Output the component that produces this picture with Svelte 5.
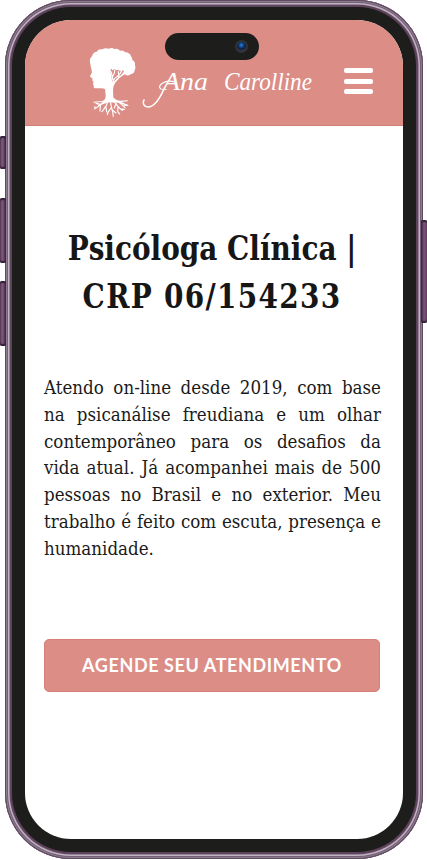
<script>
  const titleLines = ['Psicóloga Clínica |', 'CRP 06/154233'];
  const bioLines = [
    'Atendo on-line desde 2019, com base',
    'na psicanálise freudiana e um olhar',
    'contemporâneo para os desafios da',
    'vida atual. Já acompanhei mais de 500',
    'pessoas no Brasil e no exterior. Meu',
    'trabalho é feito com escuta, presença e',
    'humanidade.'
  ];
</script>

<div class="stage">
  <i class="key left mute"></i>
  <i class="key left up"></i>
  <i class="key left down"></i>
  <i class="key right"></i>
  <div class="phone">
    <div class="bezel">
      <div class="screen">
        <header>
          <svg class="tree" viewBox="0 0 210 252" aria-hidden="true">
            <path fill="#fff" d="M32 78 L30 66 Q28 56 36 49 Q38 37 50 35 Q55 26 67 28 Q76 22 87 26 Q95 22 103 27 Q114 24 120 32 Q130 30 136 37 Q150 38 153 49 Q158 54 157 60 Q167 66 165 75 Q168 84 164 91 Q163 101 152 103 Q144 110 134 103 Q126 109 119 113 L106 128 Q99 137 99 150 L100 172 Q105 181 120 182 L144 181 L143 184 L124 186 L146 196 L144 198 L113 188 L85 187 L55 198 L53 196 L75 185 L40 188 L40 185 L67 183 Q78 180 77 165 L75 148 Q70 144 59 145 L44 145 Q40 144 41 138 L39 130 L41 125 L37 122 L37 115 L30 110 Q31 106 36 97 Z" />
            <path fill="#db8d86" d="M90 89 L95 87 L97 91 L104 87 L109 91 L115 89 L120 93 L129 90 L132 94 L123 106 L113 113 L99 127 L96 121 L94 108 Z" />
            <g fill="none" stroke="#fff" stroke-width="3.5" stroke-linecap="round">
              <path d="M99 128 C101 113 107 111 120 108 M99 120 L94 98 L91 92 M98 109 L103 99 L104 90 M111 110 L120 101 L126 91 M116 105 L115 95" />
              <path d="M80 179 C65 188 60 199 43 207 M63 194 L48 190 M61 196 L60 213 M85 182 C80 200 72 207 66 215 M78 201 L80 216 M91 181 C92 199 98 208 100 229 M93 204 L84 217 L82 224 M97 210 L108 219 M98 181 C110 191 113 202 127 211 M114 199 L113 215 L119 222 M108 190 L103 204 M118 187 L135 203 M131 198 L141 195 M50 203 L43 201 M123 207 L133 208" />
            </g>
          </svg>
          <svg class="name" viewBox="0 0 180 50" role="img" aria-label="Ana Carolline">
            <path d="M24 29 C20 38 15 47 8 47 C4 47 2 43 4 40" fill="none" stroke="#fff" stroke-width="1.6" stroke-linecap="round" />
            <path d="M35 22 C25 19 16 26 21 29" fill="none" stroke="#fff" stroke-width="1.2" stroke-linecap="round" />
            <text x="23" y="30" textLength="45" lengthAdjust="spacingAndGlyphs">Ana</text>
            <text x="84" y="30" textLength="88" lengthAdjust="spacingAndGlyphs">Carolline</text>
          </svg>
          <button class="menu" aria-label="Menu"><i></i><i></i><i></i></button>
        </header>
        <main>
          <h1>
            {#each titleLines as line}<span>{line}</span>{/each}
          </h1>
          <p>
            {#each bioLines as line}<span>{line}</span>{/each}
          </p>
          <button class="cta"><span>AGENDE SEU ATENDIMENTO</span></button>
        </main>
      </div>
    </div>
  </div>
  <div class="island"><i></i></div>
</div>

<style>
  :global(body) { margin: 0; background: #fff; }
  * { box-sizing: border-box; }
  .stage { position: relative; width: 427px; height: 860px; padding: 0 4px 1px 5px; overflow: hidden; }
  .phone {
    height: 859px; padding: 7px; border-radius: 66px; background: #5b4059;
    box-shadow: inset 0 0 0 1px #604a60, inset 0 0 0 2px #8d7b90, inset 0 0 0 3px #746076, inset 0 0 0 4.5px #c0b3c2, inset 0 0 0 5.5px #684c66;
  }
  .bezel { height: 845px; padding: 13px; border-radius: 59px; background: #1d1d1b; }
  .screen { height: 819px; border-radius: 46px; overflow: hidden; background: #fff; }
  .key { position: absolute; width: 6px; border-radius: 2px; background: linear-gradient(90deg, #604161, #7c597a 45%, #392139); box-shadow: inset 0 2px 1px #36223a, inset 0 -2px 1px #36223a; }
  .left { left: 0; }
  .mute { top: 136px; height: 33px; }
  .up { top: 198px; height: 65px; }
  .down { top: 281px; height: 65px; }
  .right { right: 0; top: 220px; height: 103px; background: linear-gradient(90deg, #392139, #7b507a 50%, #69456a); }
  .island { position: absolute; left: 165px; top: 33px; width: 94px; height: 27px; border-radius: 14px; background: #1d1d1b; display: flex; align-items: center; justify-content: flex-end; padding-right: 11px; }
  .island i { width: 13px; height: 13px; border-radius: 50%; border: 2px solid #30343a; background: radial-gradient(circle at 48% 35%, #2476c8 0 8%, #124c93 25%, #101b38 55%, #44474b 80%); }
  header { display: flex; height: 106px; padding: 20px 30px 0 55px; background: #db8d86; border-bottom: 1px solid #d17f79; }
  .tree { width: 70px; height: 84px; flex: none; }
  .name { width: 180px; height: 50px; margin: 20px 0 0 -10px; flex: none; overflow: visible; }
  .name text { fill: #fff; font: italic 26px "Liberation Serif", serif; }
  .menu { display: flex; flex-direction: column; justify-content: space-between; width: 29px; height: 26px; margin: 28px 0 0 auto; padding: 0; border: 0; background: none; flex: none; }
  .menu i { height: 5px; border-radius: 2px; background: #fff; }
  main { display: flex; flex-direction: column; padding: 99px 23px 0 19px; }
  h1 { margin: 0; color: #161616; font: bold 33px/48px "DejaVu Serif Condensed", "DejaVu Serif", serif; display: flex; flex-direction: column; align-items: center; white-space: nowrap; transform: scaleX(.94); }
  h1 span:last-child { letter-spacing: 1.4px; }
  p { width: 332px; margin: 54px 0 0; color: #1a1a1a; font: 18.3px/26.8px "DejaVu Serif Condensed", "DejaVu Serif", serif; transform: scaleX(1.015); transform-origin: 0 0; }
  p span { display: block; white-space: nowrap; text-align: justify; text-align-last: justify; }
  p span:last-child { text-align-last: left; }
  .cta { display: flex; align-items: center; justify-content: center; width: 336px; height: 53px; margin: 76px 0 0; padding: 0 0 1px; border: 1px solid #d77f79; border-radius: 5px; background: #db8d86; color: #fff; font: bold 18px "Lato", sans-serif; letter-spacing: .6px; white-space: nowrap; }
</style>
